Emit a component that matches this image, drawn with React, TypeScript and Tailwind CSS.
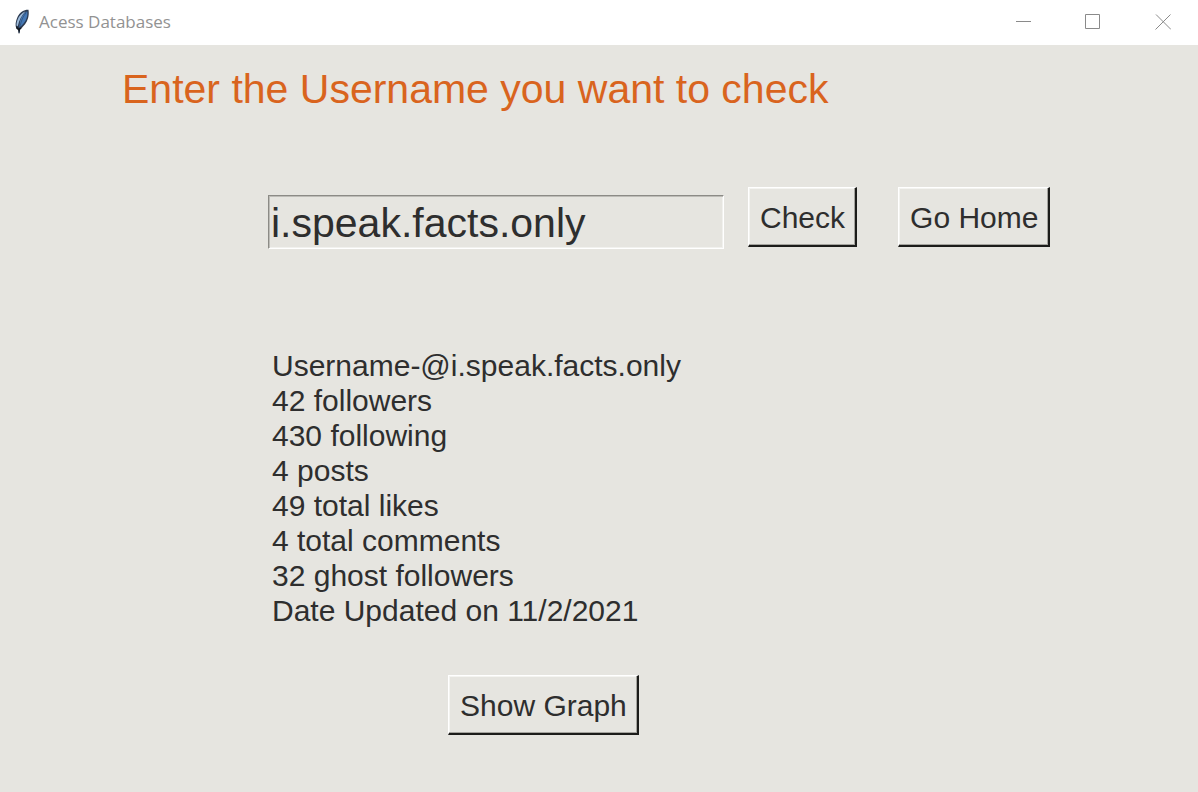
import { useState } from "react";
import type { ReactNode } from "react";

const stats = [
  "Username-@i.speak.facts.only",
  "42 followers",
  "430 following",
  "4 posts",
  "49 total likes",
  "4 total comments",
  "32 ghost followers",
  "Date Updated on 11/2/2021",
];

function FeatherIcon() {
  return (
    <svg width="16" height="26" viewBox="0 0 16 26" aria-hidden="true">
      <path d="M14.500 .8C10.500 .5 6 3 3.500 8 1.500 12.500 1 16.500 2.300 19.500L4 20.500 5 25l1.300-5C9.800 17.500 13 13.500 14.100 9c.7-2.800.9-5.200.4-8.200z" fill="#2b3a50" />
      <path d="M13.200 2.300C10 4 7.500 7.500 6 12l-.8 6.500c3.500-2.500 6.700-6 7.800-10.500.5-2.200.6-3.800.2-5.700z" fill="#4478b5" />
      <path d="M11.500 2.300C7.800 3.800 5 7 3.500 11c-.9 2.500-1.200 4.500-.8 6.500l1.200-.8C5 11.500 7.700 6.500 11.500 2.300z" fill="#9dbbdb" />
      <path d="M12.300 3.500C9 7.500 6.300 12.500 5 24" fill="none" stroke="#2b4a75" strokeWidth=".7" />
      <path d="M2 16.500l.7 3.500 1.600 1L5 25l1.200-4.500 2.300-2-2.500.3-1.500.7-1-1.300z" fill="#10151c" />
    </svg>
  );
}

function CaptionButton({ label, children }: { label: string; children: ReactNode }) {
  return (
    <button type="button" aria-label={label} className="flex h-[43px] w-[70px] items-center justify-center">
      <svg width="16" height="16" viewBox="0 0 16 16" fill="none" stroke="#8a8a8a" strokeWidth="1" aria-hidden="true">
        {children}
      </svg>
    </button>
  );
}

function RaisedButton({ children }: { children: ReactNode }) {
  return (
    <button
      type="button"
      className="h-[60px] shrink-0 border-t border-r-2 border-b-2 border-l border-t-white border-r-[#1c1c1a] border-b-[#1c1c1a] border-l-white pt-0.5 pr-2.5 pl-[11px] text-[30px] leading-9 shadow-[inset_-1px_-1px_0_#a5a49f,inset_1px_1px_0_#f4f4f1]"
    >
      {children}
    </button>
  );
}

export default function App() {
  const [username, setUsername] = useState("i.speak.facts.only");

  return (
    <div className="flex min-h-screen flex-col bg-[#e6e5e0] font-['Liberation_Sans',Arial,sans-serif] text-[#2e2e2e]">
      <header className="flex h-[45px] items-start justify-between bg-white pl-3.5">
        <div className="flex h-[43px] items-center gap-[9px]">
          <FeatherIcon />
          <span className="font-['Open_Sans','Noto_Sans',sans-serif] text-[17px] text-[#929292]">Acess Databases</span>
        </div>
        <div className="flex">
          <CaptionButton label="Minimize">
            <path d="M1 7.500h15" />
          </CaptionButton>
          <CaptionButton label="Maximize">
            <path d="M.5 .5h14v14H.5z" />
          </CaptionButton>
          <CaptionButton label="Close">
            <path d="M1 .5l15 15M15.500 .5l-15 15" />
          </CaptionButton>
        </div>
      </header>

      <main className="flex-1 pt-5">
        <h1 className="pl-[122px] text-[41px] leading-[48px] text-[#d9641e]">
          <label htmlFor="username">Enter the Username you want to check</label>
        </h1>

        <form className="mt-[74px] flex pl-[268px]" onSubmit={(e) => e.preventDefault()}>
          <input
            id="username"
            type="text"
            value={username}
            onChange={(e) => setUsername(e.target.value)}
            spellCheck={false}
            className="mt-2 h-[54px] w-[456px] border border-t-[#8c8b86] border-r-white border-b-white border-l-[#8c8b86] bg-transparent px-0.5 pt-0.5 text-[41px] leading-[48px] shadow-[inset_1px_1px_0_#bdbcb7,inset_-1px_-1px_0_#f1f1ee] outline-none"
          />
          <div className="ml-6 flex gap-[41px]">
            <RaisedButton>Check</RaisedButton>
            <RaisedButton>Go Home</RaisedButton>
          </div>
        </form>

        <ul className="mt-[99px] pl-[272px] text-[30px] leading-[35px]">
          {stats.map((line) => (
            <li key={line}>{line}</li>
          ))}
        </ul>

        <div className="mt-[47px] pb-[57px] pl-[448px]">
          <RaisedButton>Show Graph</RaisedButton>
        </div>
      </main>
    </div>
  );
}
